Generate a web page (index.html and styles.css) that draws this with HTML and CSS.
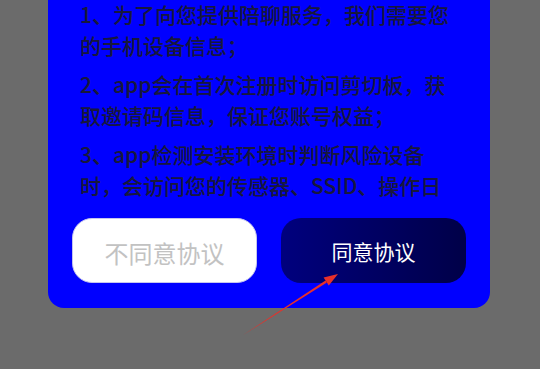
FILE: index.html
```html
<!DOCTYPE html>
<html lang="zh-CN">
<head>
<meta charset="utf-8">
<title>用户协议</title>
<link rel="stylesheet" href="styles.css">
</head>
<body>
<div class="card">
  <div class="scroll">
    <p>1、为了向您提供陪聊服务，我们需要您的手机设备信息；</p>
    <p>2、app会在首次注册时访问剪切板，获取邀请码信息，保证您账号权益；</p>
    <p>3、app检测安装环境时判断风险设备时，会访问您的传感器、SSID、操作日志等信息，用于保障您的账号安全；</p>
  </div>
  <div class="actions">
    <button class="btn btn-decline">不同意协议</button>
    <button class="btn btn-agree">同意协议</button>
  </div>
</div>
<svg class="arrow" width="540" height="369" viewBox="0 0 540 369">
  <polygon points="243,335 326.9,282.6 325.5,280.6" fill="#e8302a"/>
  <polygon points="338,274 328.8,285.6 323.6,277.6" fill="#e8302a"/>
</svg>
</body>
</html>
```

FILE: styles.css
```css
html, body {
  margin: 0;
  padding: 0;
}
body {
  background: #6b6b6b;
  width: 540px;
  height: 369px;
  overflow: hidden;
  position: relative;
  font-family: "Noto Sans CJK SC", "Noto Sans", sans-serif;
}
.card {
  width: 442px;
  margin: -30px 0 0 48px;
  padding: 29px 0 25px 0;
  background: #0000ff;
  border-radius: 16px;
  box-sizing: border-box;
}
.scroll {
  height: 203px;
  overflow: hidden;
  padding: 0 38px 0 32px;
}
.scroll p {
  margin: 0 0 8px 0;
  font-size: 21px;
  font-weight: 500;
  line-height: 31px;
  color: #18183c;
}
.actions {
  display: flex;
  gap: 24px;
  padding: 0 24px;
  margin-top: 16px;
}
.btn {
  flex: 0 0 185px;
  height: 65px;
  border-radius: 20px;
  font-family: "Noto Sans CJK SC", "Noto Sans", sans-serif;
  padding: 0;
  cursor: pointer;
}
.btn-decline {
  background: #ffffff;
  border: 1.5px solid #c4c4ee;
  color: #c2c2c2;
  font-size: 24px;
  padding-top: 3px;
}
.btn-agree {
  background: linear-gradient(90deg, #00007e 0%, #000048 100%);
  border: none;
  color: #ffffff;
  font-size: 21px;
}
.arrow {
  position: absolute;
  left: 0;
  top: 0;
  pointer-events: none;
}
```
